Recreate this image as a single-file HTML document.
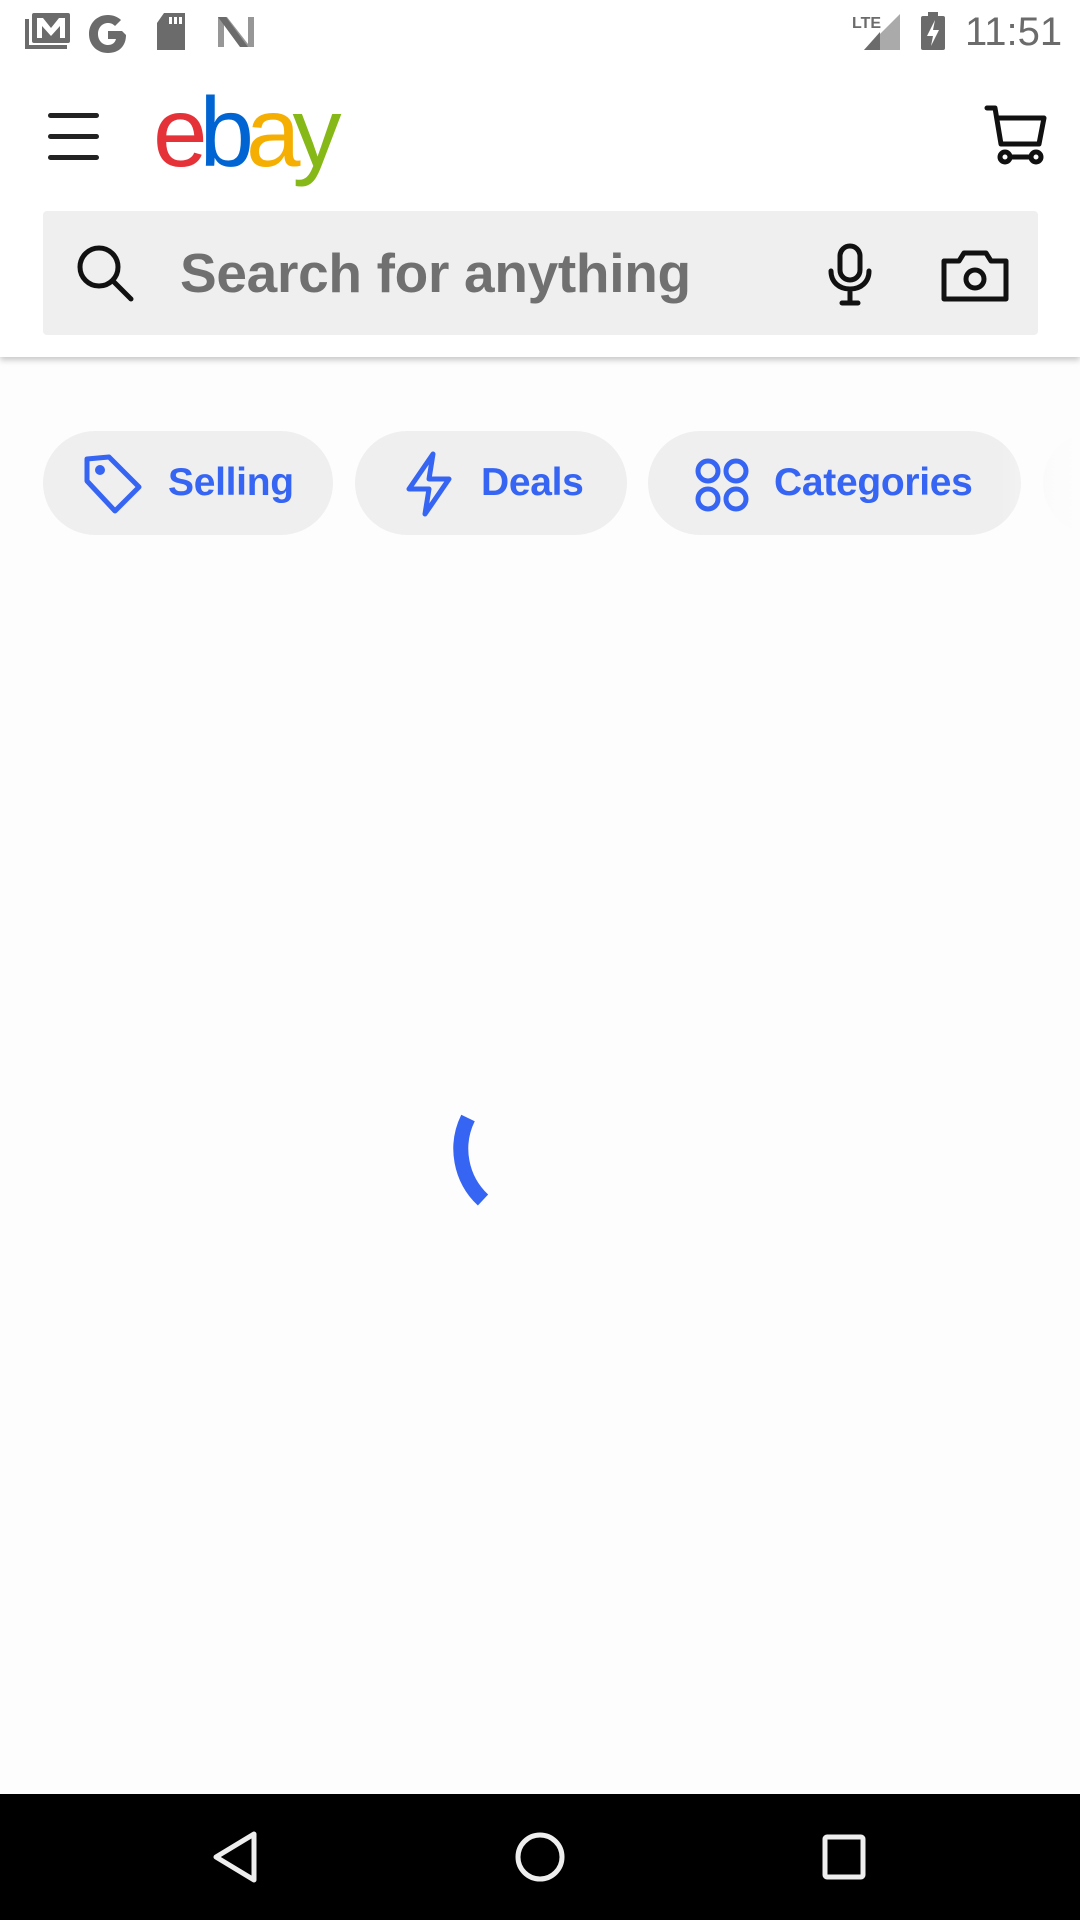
<!DOCTYPE html>
<html><head><meta charset="utf-8"><style>
html,body{margin:0;padding:0;width:1080px;height:1920px;background:#fdfdfd;overflow:hidden;font-family:"Liberation Sans",sans-serif;position:relative}
.abs{position:absolute}
.header{position:absolute;left:0;top:0;width:1080px;height:357px;background:#fff;box-shadow:0 3px 6px rgba(0,0,0,0.22)}
.search{position:absolute;left:43px;top:211px;width:995px;height:124px;background:#efefef;border-radius:4px}
.chip{position:absolute;top:431px;height:104px;background:#efefef;border-radius:52px}
.chip span{position:absolute;top:30px;font-size:39px;font-weight:bold;color:#3665f3;letter-spacing:-0.3px}
</style></head><body>
<div class="header">
 <div class="abs" style="left:48px;top:113px;width:51px;height:5px;background:#222;border-radius:3px"></div>
 <div class="abs" style="left:48px;top:134px;width:51px;height:5px;background:#222;border-radius:3px"></div>
 <div class="abs" style="left:48px;top:155px;width:51px;height:5px;background:#222;border-radius:3px"></div>
 <div class="abs" style="left:153px;top:82px;font-size:98px;letter-spacing:-8px;line-height:100px;font-family:'Liberation Sans',sans-serif"><span style="color:#e53238">e</span><span style="color:#0064d2">b</span><span style="color:#f5af02">a</span><span style="color:#86b817">y</span></div>
 <svg class="abs" style="left:984px;top:104px" width="66" height="64" viewBox="0 0 66 64" fill="none" stroke="#111" stroke-width="5" stroke-linejoin="round" stroke-linecap="round">
  <path d="M3 4h8l6 36h38l5-26H14"/>
  <circle cx="21" cy="53" r="5"/><circle cx="52" cy="53" r="5"/><path d="M26 53h21"/>
 </svg>
 <div class="search">
  <svg class="abs" style="left:32px;top:32px" width="62" height="62" viewBox="0 0 62 62" fill="none" stroke="#111" stroke-width="5" stroke-linecap="round"><circle cx="24" cy="24" r="19"/><path d="M38 38l18 18"/></svg>
  <div class="abs" style="left:137px;top:30px;font-size:55px;font-weight:bold;color:#707070;letter-spacing:-0.3px">Search for anything</div>
  <svg class="abs" style="left:782px;top:32px" width="50" height="64" viewBox="0 0 50 64" fill="none" stroke="#111" stroke-width="5" stroke-linecap="round"><rect x="15" y="3" width="20" height="34" rx="10"/><path d="M6 28c0 11 8 18 19 18s19-7 19-18M25 46v12M17 60h16"/></svg>
  <svg class="abs" style="left:898px;top:38px" width="68" height="54" viewBox="0 0 68 54" fill="none" stroke="#111" stroke-width="5" stroke-linejoin="round"><path d="M3 12h15l5-8h22l5 8h15v38H3z"/><circle cx="34" cy="30" r="9"/></svg>
 </div>
</div>
<!-- status bar -->
<svg class="abs" style="left:0;top:0" width="1080" height="74">
 <g fill="#6b6b6b">
  <path d="M25 19h4v26h38v4H25z"/>
  <rect x="32" y="13" width="38" height="30" rx="2"/>
  <path d="M37 18h6l8 10 8-10h6v20h-5V26l-9 10-9-10v12h-5z" fill="#fff"/>
  <path d="M122 31h-14v8h8c-1 4-4 6-8 6-6 0-10-5-10-11s4-11 10-11c3 0 5 1 7 3l6-6c-3-3-8-5-13-5-11 0-19 8-19 19s8 19 19 19 18-7 18-18z"/>
  <path d="M164 13h21v37h-28V23z"/>
  <rect x="169" y="17" width="3" height="7" fill="#fff"/><rect x="174" y="17" width="3" height="7" fill="#fff"/><rect x="179" y="17" width="3" height="7" fill="#fff"/>
  <path d="M218 17h9l21 27v-27h6v30h-9l-21-27v27h-6z" opacity="0.7"/>
  <path d="M218 17h8l22 30h-8z"/>
  <path d="M900 14v36h-36z" fill="#aaa"/>
  <path d="M880 32v18h-16z"/>
  <text x="852" y="28" font-size="16" font-weight="bold" fill="#6b6b6b">LTE</text>
  <rect x="921" y="16" width="24" height="34" rx="2"/><rect x="928" y="12" width="10" height="5"/>
  <path d="M935 20l-8 16h6l-2 10 8-16h-6z" fill="#fff"/>
 </g>
 <text x="965" y="45" font-size="40" fill="#6b6b6b">11:51</text>
</svg>
<!-- chips -->
<div class="chip" style="left:43px;width:290px">
 <svg class="abs" style="left:40px;top:22px" width="62" height="62" viewBox="0 0 62 62" fill="none" stroke="#3665f3" stroke-width="5" stroke-linejoin="round"><path d="M4 6l22-2 30 30-24 24L4 28z"/><circle cx="17" cy="17" r="2.5" fill="#3665f3"/></svg>
 <span style="left:125px">Selling</span>
</div>
<div class="chip" style="left:355px;width:272px">
 <svg class="abs" style="left:48px;top:20px" width="50" height="66" viewBox="0 0 50 66" fill="none" stroke="#3665f3" stroke-width="5" stroke-linejoin="round"><path d="M30 3L6 38h20l-4 25 24-35H26z"/></svg>
 <span style="left:126px">Deals</span>
</div>
<div class="chip" style="left:648px;width:373px">
 <svg class="abs" style="left:46px;top:26px" width="56" height="56" viewBox="0 0 56 56" fill="none" stroke="#3665f3" stroke-width="5"><circle cx="14" cy="14" r="10"/><circle cx="42" cy="14" r="10"/><circle cx="14" cy="42" r="10"/><circle cx="42" cy="42" r="10"/></svg>
 <span style="left:126px">Categories</span>
</div>
<div class="chip" style="left:1043px;width:200px;background:linear-gradient(90deg,#f8f8f8,#fdfdfd 40px)"></div>
<div class="abs" style="left:1000px;top:431px;width:80px;height:104px;background:linear-gradient(90deg,rgba(253,253,253,0),rgba(253,253,253,0.9))"></div>
<!-- spinner -->
<svg class="abs" style="left:0;top:1000px" width="1080" height="300">
 <path d="M468 118 A70 70 0 0 0 483 200" fill="none" stroke="#3665f3" stroke-width="15"/>
</svg>
<!-- nav bar -->
<div class="abs" style="left:0;top:1794px;width:1080px;height:126px;background:#000"></div>
<svg class="abs" style="left:0;top:1794px" width="1080" height="126" fill="none" stroke="#eee" stroke-width="5" stroke-linejoin="round">
 <path d="M254 40v46l-38-23z"/>
 <circle cx="540" cy="63" r="22"/>
 <rect x="825" y="43" width="38" height="40" rx="2"/>
</svg>
</body></html>
